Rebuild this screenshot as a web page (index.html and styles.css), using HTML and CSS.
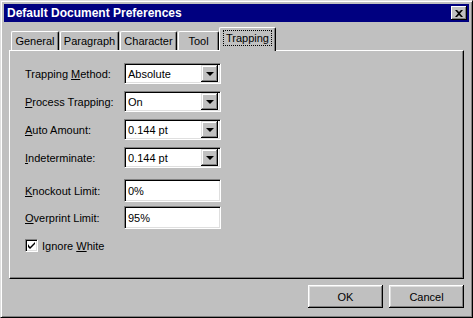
FILE: index.html
```html
<!DOCTYPE html>
<html lang="en">
<head>
    <meta charset="UTF-8">
    <title>Default Document Preferences</title>
    <link rel="stylesheet" href="styles.css">
</head>
<body>
    <div class="window">
        <div class="titlebar">
            <span class="title">Default Document Preferences</span>
            <span class="close-btn">
                <svg width="8" height="7" viewBox="0 0 8 7"><path d="M0 0h2l2 2 2-2h2L5 3.5 8 7H6L4 5 2 7H0l3-3.5z" fill="#000"/></svg>
            </span>
        </div>
        <div class="tabs">
            <div class="tab tab-general">General</div>
            <div class="tab tab-paragraph">Paragraph</div>
            <div class="tab tab-character">Character</div>
            <div class="tab tab-tool">Tool</div>
            <div class="tab active"><span class="focus">Trapping</span></div>
        </div>
        <div class="panel">
            <div class="row">
                <label>Trapping <u>M</u>ethod:</label>
                <div class="select"><span class="value">Absolute</span><span class="drop"><i></i></span></div>
            </div>
            <div class="row">
                <label><u>P</u>rocess Trapping:</label>
                <div class="select"><span class="value">On</span><span class="drop"><i></i></span></div>
            </div>
            <div class="row">
                <label><u>A</u>uto Amount:</label>
                <div class="select"><span class="value">0.144 pt</span><span class="drop"><i></i></span></div>
            </div>
            <div class="row">
                <label><u>I</u>ndeterminate:</label>
                <div class="select"><span class="value">0.144 pt</span><span class="drop"><i></i></span></div>
            </div>
            <div class="row row-input first-input">
                <label><u>K</u>nockout Limit:</label>
                <div class="input">0%</div>
            </div>
            <div class="row row-input">
                <label><u>O</u>verprint Limit:</label>
                <div class="input">95%</div>
            </div>
            <div class="row check-row">
                <span class="checkbox">
                    <svg width="7" height="7" viewBox="0 0 7 7"><path d="M0 2v3l2 2 5-5V0L2 5z" fill="#000"/></svg>
                </span>
                <span>Ignore <u>W</u>hite</span>
            </div>
        </div>
        <div class="buttons">
            <button class="btn">OK</button>
            <button class="btn">Cancel</button>
        </div>
    </div>
</body>
</html>
```

FILE: styles.css
```css
body {
    margin: 0;
    background-color: #c0c0c0;
    font-family: "Liberation Sans", Arial, sans-serif;
    font-size: 11px;
    color: #000;
}
.window {
    width: 473px;
    height: 318px;
    box-sizing: border-box;
    padding: 3px;
    background-color: #c0c0c0;
    border-top: 1px solid #dfdfdf;
    border-left: 1px solid #dfdfdf;
    border-right: 1px solid #000;
    border-bottom: 1px solid #000;
    box-shadow: inset 1px 1px 0 #fff, inset -1px -1px 0 #808080;
}
.titlebar {
    height: 18px;
    background-color: #000080;
    color: #fff;
    display: flex;
    align-items: center;
    justify-content: space-between;
    padding: 0 2px 0 3px;
}
.title {
    font-weight: bold;
    font-size: 12px;
}
.close-btn {
    width: 16px;
    height: 14px;
    box-sizing: border-box;
    background-color: #c0c0c0;
    display: flex;
    align-items: center;
    justify-content: center;
    box-shadow: inset -1px -1px 0 #000, inset 1px 1px 0 #fff, inset -2px -2px 0 #808080;
}
.tabs {
    display: flex;
    align-items: flex-end;
    height: 25px;
    margin: 3px 0 0 7px;
}
.tab {
    height: 19px;
    box-sizing: border-box;
    padding-top: 2px;
    text-align: center;
    margin-right: 1px;
    border-top: 1px solid #fff;
    border-left: 1px solid #fff;
    border-right: 1px solid #000;
    border-radius: 2px 2px 0 0;
    box-shadow: inset -1px 0 0 #808080;
    line-height: 15px;
}
.tab-general { width: 48px; }
.tab-paragraph { width: 59px; }
.tab-character { width: 57px; }
.tab-tool { width: 41px; }
.tab.active {
    width: 57px;
    height: 24px;
    margin-left: -1px;
    padding-top: 3px;
    position: relative;
    top: 1px;
    background-color: #c0c0c0;
    z-index: 1;
}
.focus {
    outline: 1px dotted #000;
    outline-offset: 1px;
    padding: 0 1px;
}
.panel {
    margin-left: 5px;
    width: 455px;
    height: 229px;
    box-sizing: border-box;
    border-top: 1px solid #fff;
    border-left: 1px solid #fff;
    border-right: 1px solid #000;
    border-bottom: 1px solid #000;
    box-shadow: inset -1px -1px 0 #808080;
    padding: 12px 15px;
    display: flex;
    flex-direction: column;
    gap: 7px;
}
.row {
    display: flex;
    align-items: center;
    height: 21px;
}
.row label {
    width: 99px;
}
.row-input {
    height: 23px;
}
.first-input {
    margin-top: 4px;
}
.row-input + .row-input {
    margin-top: -3px;
}
.select, .input {
    width: 97px;
    height: 21px;
    box-sizing: border-box;
    background-color: #fff;
    border-top: 1px solid #808080;
    border-left: 1px solid #808080;
    border-right: 1px solid #fff;
    border-bottom: 1px solid #fff;
    box-shadow: inset 1px 1px 0 #000, inset -1px -1px 0 #dfdfdf;
    display: flex;
    align-items: center;
    justify-content: space-between;
    padding: 0 2px 0 3px;
}
.input {
    height: 23px;
}
.drop {
    width: 17px;
    height: 17px;
    box-sizing: border-box;
    background-color: #c0c0c0;
    box-shadow: inset -1px -1px 0 #000, inset 1px 1px 0 #dfdfdf, inset -2px -2px 0 #808080, inset 2px 2px 0 #fff;
    display: flex;
    align-items: center;
    justify-content: center;
}
.drop i {
    width: 0;
    height: 0;
    margin-top: 1px;
    border-left: 4px solid transparent;
    border-right: 4px solid transparent;
    border-top: 4px solid #000;
}
.check-row {
    margin-top: -1px;
    gap: 4px;
}
.checkbox {
    width: 13px;
    height: 13px;
    box-sizing: border-box;
    background-color: #fff;
    border-top: 1px solid #808080;
    border-left: 1px solid #808080;
    border-right: 1px solid #fff;
    border-bottom: 1px solid #fff;
    box-shadow: inset 1px 1px 0 #000, inset -1px -1px 0 #dfdfdf;
    display: flex;
    align-items: center;
    justify-content: center;
}
.buttons {
    display: flex;
    justify-content: flex-end;
    gap: 6px;
    margin: 6px 5px 0 0;
}
.btn {
    width: 75px;
    height: 23px;
    background-color: #c0c0c0;
    border: none;
    font-family: "Liberation Sans", Arial, sans-serif;
    font-size: 11px;
    color: #000;
    box-shadow: inset -1px -1px 0 #000, inset 1px 1px 0 #fff, inset -2px -2px 0 #808080, inset 2px 2px 0 #dfdfdf;
}
```
